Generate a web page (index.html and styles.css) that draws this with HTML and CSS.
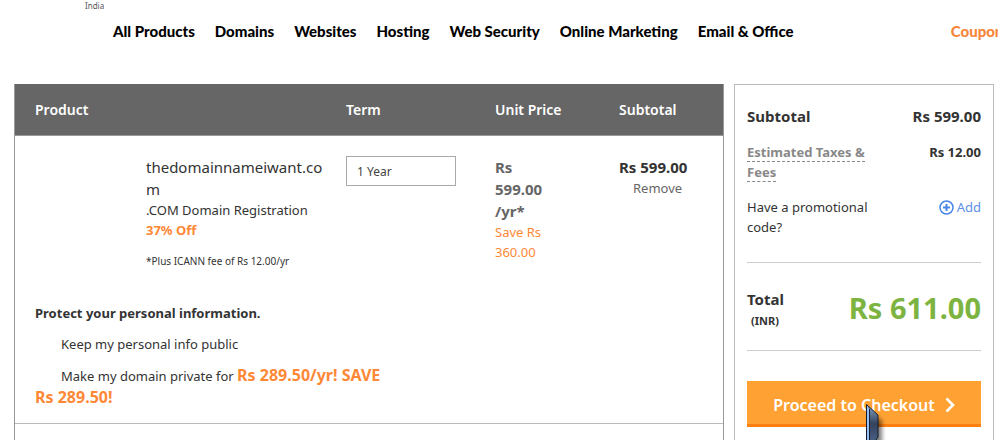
FILE: index.html
```
<!DOCTYPE html>
<html lang="en">
<head>
  <meta charset="utf-8">
  <title>Shopping Cart</title>
  <link rel="stylesheet" href="styles.css">
</head>
<body>
  <header>
    <div class="region">India</div>
    <nav class="menu">
      <a href="#">All Products</a>
      <a href="#">Domains</a>
      <a href="#">Websites</a>
      <a href="#">Hosting</a>
      <a href="#">Web Security</a>
      <a href="#">Online Marketing</a>
      <a href="#">Email &amp; Office</a>
      <a href="#" class="coupons">Coupons</a>
    </nav>
  </header>

  <main class="container">
    <section class="cart">
      <table>
        <thead>
          <tr>
            <th class="col-product">Product</th>
            <th class="col-term">Term</th>
            <th class="col-price">Unit Price</th>
            <th class="col-subtotal">Subtotal</th>
          </tr>
        </thead>
        <tbody>
          <tr class="item">
            <td class="product">
              <div class="domain">thedomainnameiwant.com</div>
              <div>.COM Domain Registration</div>
              <div class="discount">37% Off</div>
              <div class="fee">*Plus ICANN fee of Rs 12.00/yr</div>
            </td>
            <td>
              <select class="term" aria-label="Term">
                <option>1 Year</option>
                <option>2 Years</option>
              </select>
            </td>
            <td>
              <div class="unit-price">Rs 599.00 /yr*</div>
              <div class="save">Save Rs 360.00</div>
            </td>
            <td>
              <div class="item-total">Rs 599.00</div>
              <a href="#" class="remove">Remove</a>
            </td>
          </tr>
          <tr class="privacy">
            <td colspan="4">
              <h2>Protect your personal information.</h2>
              <p>Keep my personal info public</p>
              <p>Make my domain private for <b>Rs 289.50/yr! SAVE Rs 289.50!</b></p>
            </td>
          </tr>
        </tbody>
      </table>
    </section>

    <aside class="summary">
      <div class="line subtotal">
        <span>Subtotal</span>
        <span>Rs 599.00</span>
      </div>
      <div class="line taxes">
        <span class="label"><a href="#">Estimated Taxes &amp; Fees</a></span>
        <b>Rs 12.00</b>
      </div>
      <div class="line promo">
        <span class="label">Have a promotional code?</span>
        <a href="#" class="add">
          <svg width="15" height="15" viewBox="0 0 15 15" fill="none" stroke="#4a86e8">
            <circle cx="7.5" cy="7.5" r="6.5" stroke-width="1.5"/>
            <path d="M7.5 4v7M4 7.5h7" stroke-width="2"/>
          </svg>
          Add
        </a>
      </div>
      <div class="line total">
        <div>
          <div class="total-label">Total</div>
          <div class="currency">(INR)</div>
        </div>
        <div class="amount">Rs 611.00</div>
      </div>
      <div class="checkout">
        <button type="button">
          Proceed to Checkout
          <svg width="10" height="16" viewBox="0 0 10 16" fill="none" stroke="#fff" stroke-width="2.6">
            <path d="M1.5 1.5L8 8l-6.500 6.500"/>
          </svg>
        </button>
        <svg class="pointer" width="24" height="38" viewBox="0 0 24 38">
          <defs>
            <linearGradient id="steel" x1="0" y1="0" x2="0" y2="1">
              <stop offset="0" stop-color="#8ba3ca"/>
              <stop offset="0.500" stop-color="#34435c"/>
              <stop offset="1" stop-color="#4b6186"/>
            </linearGradient>
            <filter id="soft" x="-50%" y="-20%" width="200%" height="140%">
              <feGaussianBlur stdDeviation="2"/>
            </filter>
          </defs>
          <path d="M7 12l9 4v24H7z" fill="#000" opacity="0.5" filter="url(#soft)"/>
          <path d="M0.500 0.500L12 11v22l-4 6H0.500z" fill="url(#steel)" stroke="#101c2e"/>
          <path d="M1 2l2 3v33H1z" fill="#9cc0f2"/>
          <path d="M3.500 5v33" stroke="#14233a"/>
        </svg>
      </div>
    </aside>
  </main>
</body>
</html>
```

FILE: styles.css
```
* {
  box-sizing: border-box;
}

body {
  margin: 0;
  height: 100vh;
  overflow: hidden;
  display: flex;
  flex-direction: column;
  background-color: #fff;
  color: #333;
  font-family: "Noto Sans", "Open Sans", sans-serif;
  font-size: 13px;
  line-height: 20px;
}

a {
  color: inherit;
  text-decoration: none;
}

/* top bar */
header {
  height: 84px;
  flex-shrink: 0;
}

.region {
  padding-left: 85px;
  font-size: 8px;
  line-height: 12px;
  color: #555;
}

.menu {
  display: flex;
  gap: 20px;
  padding: 9px 0 0 113px;
  margin-right: -12px;
  font-family: Lato, sans-serif;
  font-size: 15px;
  font-weight: 900;
  color: #000;
  white-space: nowrap;
}

.menu .coupons {
  margin-left: auto;
  color: #f7863b;
}

.container {
  flex: 1;
  display: flex;
  gap: 10px;
  padding: 0 4px 0 14px;
}

/* cart */
.cart {
  flex: 1;
  border: 1px solid #999;
  border-top: none;
  border-bottom: none;
}

table {
  width: 100%;
  table-layout: fixed;
  border-collapse: collapse;
}

th {
  height: 51px;
  padding: 2px 0 0;
  background-color: #666;
  border-bottom: 1px solid #999;
  color: #fff;
  font-size: 14px;
  font-weight: 600;
  text-align: left;
}

.col-product {
  padding-left: 20px;
}

.col-term {
  width: 149px;
}

.col-price {
  width: 124px;
}

.col-subtotal {
  width: 104px;
}

td {
  padding: 0;
  vertical-align: top;
}

.item td {
  padding-top: 20px;
}

.item .product {
  padding-left: 131px;
  padding-right: 18px;
}

.domain {
  font-size: 15px;
  line-height: 22px;
  word-break: break-all;
}

.discount {
  color: #ff8836;
  font-weight: bold;
}

.fee {
  margin-top: 11px;
  font-size: 10px;
}

.term {
  display: block;
  width: 110px;
  height: 30px;
  padding: 2px 10px 0;
  appearance: none;
  background-color: #fff;
  border: 1px solid #aaa;
  border-radius: 0;
  color: #444;
  font-family: inherit;
  font-size: 12px;
}

.unit-price {
  width: 60px;
  color: #666;
  font-size: 15px;
  font-weight: bold;
  line-height: 22px;
}

.save {
  width: 60px;
  color: #ff8836;
}

.item-total {
  font-size: 15px;
  font-weight: bold;
  line-height: 22px;
}

.remove {
  display: block;
  padding-left: 14px;
  color: #666;
}

.privacy td {
  padding: 32px 20px 14px;
  border-bottom: 1px solid #bbb;
}

.privacy h2 {
  margin: 0 0 10px;
  font-size: 13px;
  line-height: 20px;
}

.privacy p {
  max-width: 350px;
  margin: 0 0 10px;
  line-height: 22px;
  text-indent: 26px;
}

.privacy p:last-child {
  margin-bottom: 0;
}

.privacy b {
  color: #ff8836;
  font-size: 16px;
  line-height: 16px;
}

/* order summary */
.summary {
  width: 260px;
  padding: 20px 12px 0;
  border: 1px solid #bbb;
  border-bottom: none;
}

.line {
  display: flex;
  justify-content: space-between;
  align-items: flex-start;
}

.label {
  width: 130px;
}

.subtotal {
  margin-bottom: 15px;
  font-size: 15px;
  font-weight: bold;
  line-height: 22px;
}

.taxes {
  margin-bottom: 15px;
}

.taxes a {
  border-bottom: 1px dashed #888;
  color: #888;
  font-weight: bold;
}

.promo {
  padding-bottom: 25px;
  border-bottom: 1px solid #ccc;
}

.add {
  display: flex;
  align-items: center;
  gap: 3px;
  color: #5c8fe6;
}

.total {
  padding: 25px 0 18px;
  border-bottom: 1px solid #ccc;
  font-weight: bold;
}

.total-label {
  font-size: 15px;
  line-height: 22px;
}

.currency {
  padding-left: 4px;
  font-size: 11px;
  line-height: 22px;
}

.amount {
  color: #7db441;
  font-size: 29px;
  line-height: 40px;
}

.checkout {
  position: relative;
  margin-top: 30px;
}

.checkout button {
  display: flex;
  justify-content: center;
  align-items: center;
  gap: 10px;
  width: 100%;
  height: 46px;
  padding: 4px 0 0;
  background-color: #ffa233;
  border: none;
  border-bottom: 3px solid #ff7f11;
  color: #fff;
  font-family: inherit;
  font-size: 16px;
  font-weight: 600;
  cursor: pointer;
}

.pointer {
  position: absolute;
  left: 119px;
  top: 23px;
}
```
